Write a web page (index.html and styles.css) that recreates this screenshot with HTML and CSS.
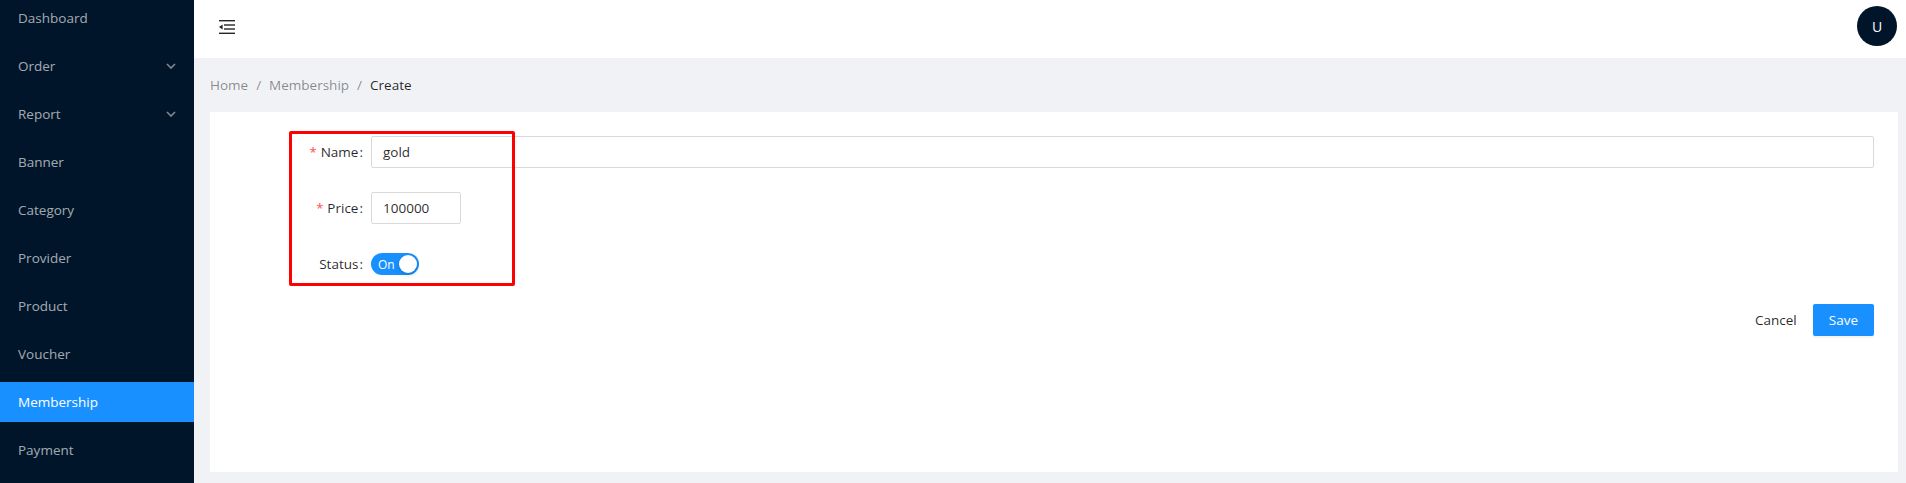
FILE: index.html
```html
<!DOCTYPE html>
<html>
<head>
<meta charset="utf-8">
<link rel="stylesheet" href="styles.css">
</head>
<body>
<div class="layout">
  <aside class="sider">
    <ul class="menu">
      <li class="item">Dashboard</li>
      <li class="item sub">Order<svg class="chev" width="10" height="6" viewBox="0 0 10 6"><polyline points="1,1 5,5 9,1" fill="none" stroke="currentColor" stroke-width="1.6"/></svg></li>
      <li class="item sub">Report<svg class="chev" width="10" height="6" viewBox="0 0 10 6"><polyline points="1,1 5,5 9,1" fill="none" stroke="currentColor" stroke-width="1.6"/></svg></li>
      <li class="item">Banner</li>
      <li class="item">Category</li>
      <li class="item">Provider</li>
      <li class="item">Product</li>
      <li class="item">Voucher</li>
      <li class="item active">Membership</li>
      <li class="item">Payment</li>
    </ul>
  </aside>
  <main class="main">
    <header class="header">
      <svg class="fold" width="16" height="14" viewBox="0 0 16 14">
        <rect x="0" y="0" width="16" height="1.4" fill="currentColor"/>
        <rect x="5" y="4.3" width="11" height="1.4" fill="currentColor"/>
        <rect x="5" y="8.3" width="11" height="1.4" fill="currentColor"/>
        <rect x="0" y="12.6" width="16" height="1.4" fill="currentColor"/>
        <polygon points="0,7 3.6,4.4 3.6,9.6" fill="currentColor"/>
      </svg>
      <div class="avatar">U</div>
    </header>
    <section class="content">
      <nav class="breadcrumb">
        <span class="crumb">Home</span><span class="sep">/</span><span class="crumb">Membership</span><span class="sep">/</span><span class="crumb current">Create</span>
      </nav>
      <div class="card">
        <div class="form">
          <div class="row">
            <label class="label"><span class="req">*</span>Name<span class="colon">:</span></label>
            <div class="control wide"><div class="input">gold</div></div>
          </div>
          <div class="row">
            <label class="label"><span class="req">*</span>Price<span class="colon">:</span></label>
            <div class="control"><div class="input small">100000</div></div>
          </div>
          <div class="row">
            <label class="label">Status<span class="colon">:</span></label>
            <div class="control"><div class="switch"><span class="sw-text">On</span><span class="handle"></span></div></div>
          </div>
          <div class="actions">
            <button class="btn text">Cancel</button>
            <button class="btn primary">Save</button>
          </div>
        </div>
        <div class="highlight"></div>
      </div>
    </section>
  </main>
</div>
</body>
</html>
```
FILE: styles.css
```css
* { box-sizing: border-box; }
html, body { margin: 0; padding: 0; }
body {
  font-family: "Open Sans", "Noto Sans", sans-serif;
  font-size: 13px;
  width: 1906px;
  height: 483px;
  overflow: hidden;
  color: rgba(0,0,0,0.85);
}
.layout { display: flex; height: 483px; }
.sider {
  width: 194px;
  flex: none;
  background: #001529;
  overflow: hidden;
}
.menu {
  list-style: none;
  margin: -2px 0 0 0;
  padding: 0;
  display: flex;
  flex-direction: column;
  gap: 8px;
}
.item {
  height: 40px;
  line-height: 40px;
  padding-left: 18px;
  padding-right: 18px;
  color: rgba(255,255,255,0.65);
  font-size: 13.5px;
  display: flex;
  align-items: center;
  justify-content: space-between;
}
.item.active { background: #1890ff; color: #fff; }
.chev { color: rgba(255,255,255,0.5); margin-right: 0; }
.main { flex: 1; display: flex; flex-direction: column; background: #f0f2f5; }
.header {
  height: 58px;
  flex: none;
  background: #fff;
  display: flex;
  align-items: center;
  justify-content: space-between;
  padding: 0 9px 0 25px;
}
.fold { color: rgba(0,0,0,0.85); margin-top: -4px; }
.avatar {
  width: 40px; height: 40px; border-radius: 50%;
  background: #001529; color: #fff;
  display: flex; align-items: center; justify-content: center;
  font-size: 14px;
  margin-top: -6px;
}
.content { flex: 1; padding: 16px 8px 11px 16px; display: flex; flex-direction: column; }
.breadcrumb { height: 22px; line-height: 22px; font-size: 13.5px; color: rgba(0,0,0,0.45); margin-bottom: 16px; }
.sep { margin: 0 8px; }
.current { color: rgba(0,0,0,0.85); }
.card { flex: 1; background: #fff; padding: 24px; position: relative; }
.row { display: flex; align-items: center; height: 32px; margin-bottom: 24px; }
.label {
  width: 137px; flex: none; text-align: right; font-size: 13.5px;
  color: rgba(0,0,0,0.85);
}
.req { color: #ff4d4f; margin-right: 4px; font-size: 13px; }
.colon { margin: 0 8px 0 1px; }
.control { flex: 1; display: flex; }
.input {
  flex: 1;
  height: 32px;
  border: 1px solid #d9d9d9;
  border-radius: 2px;
  padding: 0 11px;
  line-height: 30px;
  font-size: 13.5px;
  color: rgba(0,0,0,0.85);
}
.input.small { flex: none; width: 90px; }
.switch {
  width: 48px; height: 22px; border-radius: 11px;
  background: #1890ff; position: relative;
  display: flex; align-items: center;
}
.sw-text { color: #fff; font-size: 12px; padding-left: 7px; }
.handle {
  position: absolute; right: 2px; top: 2px;
  width: 18px; height: 18px; border-radius: 50%; background: #fff;
  box-shadow: 0 2px 4px rgba(0,35,11,0.2);
}
.actions { display: flex; justify-content: flex-end; }
.btn {
  height: 32px; padding: 0 15px; border-radius: 2px; border: 1px solid transparent;
  font-family: inherit; font-size: 13.5px; cursor: pointer;
}
.btn.text { background: transparent; color: rgba(0,0,0,0.85); }
.btn.primary { background: #1890ff; color: #fff; box-shadow: 0 2px 0 rgba(0,0,0,0.045); }
.highlight {
  position: absolute;
  left: 79px; top: 19px;
  width: 226px; height: 155px;
  border: 3px solid #ff0000;
  border-radius: 2px;
  pointer-events: none;
}
```
